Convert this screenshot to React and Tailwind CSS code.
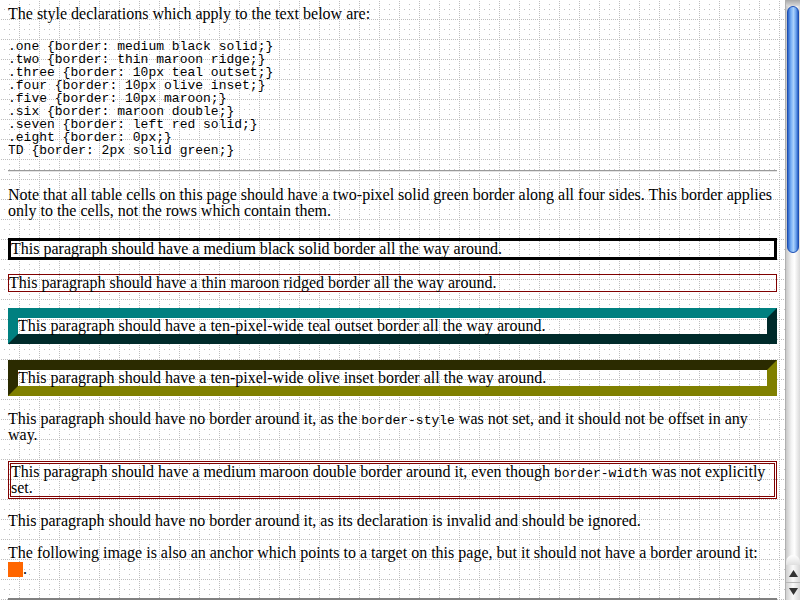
import React from 'react';

const rules = [
  '.one {border: medium black solid;}',
  '.two {border: thin maroon ridge;}',
  '.three {border: 10px teal outset;}',
  '.four {border: 10px olive inset;}',
  '.five {border: 10px maroon;}',
  '.six {border: maroon double;}',
  '.seven {border: left red solid;}',
  '.eight {border: 0px;}',
  'TD {border: 2px solid green;}',
];

function Code({ children }) {
  return <code className="font-['Liberation_Mono',monospace] text-[13px] leading-none">{children}</code>;
}

function Scrollbar() {
  return (
    <div className="flex w-[15px] shrink-0 flex-col bg-[linear-gradient(to_right,#c8c8c8,#f4f4f4_40%,#ffffff_60%,#d8d8d8)] border-l border-[#b0b0b0]">
      <div className="h-[6px] bg-[linear-gradient(to_bottom,#a8a8a8,#d8d8d8)]" />
      <div className="mx-[1px] h-[247px] rounded-full border border-[#1d4fb3] bg-[linear-gradient(to_right,#2c64c8,#79b0f5_30%,#a9d0fb_55%,#6aa2ee_80%,#2a5fc2)]" />
      <div className="flex-1" />
      <div className="h-[10px] rounded-t-full bg-[linear-gradient(to_bottom,#ffffff,#e0e0e0)]" />
      <div className="flex h-[18px] items-center justify-center border-b border-[#b8b8b8] bg-[linear-gradient(to_right,#d0d0d0,#fafafa_50%,#d8d8d8)]">
        <svg width="9" height="7" viewBox="0 0 9 7"><path d="M4.5 0 L9 7 L0 7 Z" fill="#333" /></svg>
      </div>
      <div className="flex h-[17px] items-center justify-center bg-[linear-gradient(to_right,#d0d0d0,#fafafa_50%,#d8d8d8)]">
        <svg width="9" height="7" viewBox="0 0 9 7"><path d="M0 0 L9 0 L4.5 7 Z" fill="#333" /></svg>
      </div>
    </div>
  );
}

export default function App() {
  return (
    <div className="flex h-[600px] w-[800px] overflow-hidden bg-white">
      <div
        className="flex-1 overflow-hidden px-2 pt-[6px] font-['Liberation_Serif',serif] text-[16px] leading-4 text-black
          [background-image:conic-gradient(from_90deg_at_19px_1px,#bdbdbd_25%,transparent_0),conic-gradient(from_90deg_at_1px_19px,#bdbdbd_25%,transparent_0),conic-gradient(from_90deg_at_19px_19px,#c4c4c4_25%,transparent_0),conic-gradient(from_90deg_at_19px_19px,#c4c4c4_25%,transparent_0),conic-gradient(from_90deg_at_19px_19px,#c4c4c4_25%,transparent_0),conic-gradient(from_90deg_at_19px_19px,#c4c4c4_25%,transparent_0),conic-gradient(from_90deg_at_19px_19px,#c4c4c4_25%,transparent_0)]
          [background-size:20px_2px,2px_20px,20px_20px,20px_20px,20px_20px,20px_20px,20px_20px]
          [background-position:0_0,0_0,-10px_-15px,-15px_-10px,-10px_-10px,-5px_-10px,-10px_-5px]"
      >
        <p>The style declarations which apply to the text below are:</p>

        <pre className="mt-[18px] font-['Liberation_Mono',monospace] text-[13px] leading-[13px]">
          {rules.join('\n')}
        </pre>

        <hr className="mt-[13px] border-t border-b border-t-[#9a9a9a] border-b-[#e4e4e4]" />

        <p className="mt-[15px]">
          Note that all table cells on this page should have a two-pixel solid green border along all four sides. This border applies only to the cells, not the rows which contain them.
        </p>

        <p className="mt-[19px] border-[3px] border-black">
          This paragraph should have a medium black solid border all the way around.
        </p>

        <p className="mt-[14px] border border-[#800000]">
          This paragraph should have a thin maroon ridged border all the way around.
        </p>

        <p className="mt-4 border-[10px] border-t-[#008080] border-l-[#008080] border-b-[#002b2b] border-r-[#002b2b]">
          This paragraph should have a ten-pixel-wide teal outset border all the way around.
        </p>

        <p className="mt-4 border-[10px] border-t-[#2b2b00] border-l-[#2b2b00] border-b-[#808000] border-r-[#808000]">
          This paragraph should have a ten-pixel-wide olive inset border all the way around.
        </p>

        <p className="mt-[15px]">
          This paragraph should have no border around it, as the <Code>border-style</Code> was not set, and it should not be offset in any way.
        </p>

        <p className="mt-[18px] border-[3px] border-double border-[#800000]">
          This paragraph should have a medium maroon double border around it, even though <Code>border-width</Code> was not explicitly set.
        </p>

        <p className="mt-[14px]">
          This paragraph should have no border around it, as its declaration is invalid and should be ignored.
        </p>

        <p className="mt-4">
          The following image is also an anchor which points to a target on this page, but it should not have a border around it:
          <br />
          <a href="#top" className="inline-block h-[15px] w-[15px] bg-[#ff6600] align-[-3px]" />.
        </p>

        <div className="mt-[21px] h-4 border-t-2 border-l-2 border-[#808080]" />
      </div>
      <Scrollbar />
    </div>
  );
}
